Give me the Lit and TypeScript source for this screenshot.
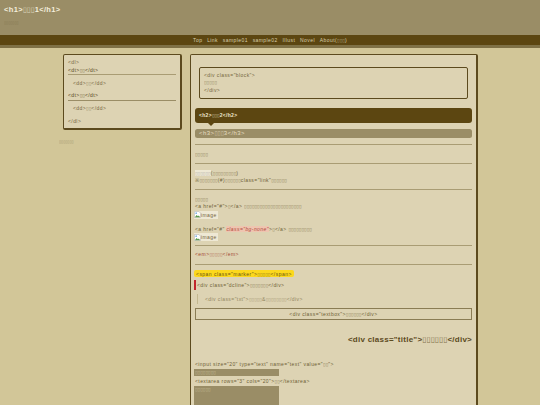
import { LitElement, html, css } from "lit";
import { customElement } from "lit/decorators.js";

const t = (n: number) => html`<span class="j">${"\u25AF".repeat(n)}</span>`;

@customElement("app-root")
export class AppRoot extends LitElement {
  static styles = css`
    :host { display: block; width: 540px; height: 405px; overflow: hidden; background: #d2c698; font-family: "Liberation Sans", Arial, sans-serif; font-size: 5px; letter-spacing: .42px; color: #6e5f36; line-height: 7.5px; }
    .j { font-family: "DejaVu Sans", sans-serif; font-size: .95em; letter-spacing: 0; font-weight: 400; opacity: .7; line-height: 0; }
    .head { height: 35px; background: #9a8d66; box-sizing: border-box; padding: 5px 4px 0; }
    h1 { margin: 0; font-size: 7.5px; line-height: 10px; color: #f4eedc; letter-spacing: .35px; }
    .sub { margin-top: 4px; color: #7d7048; font-size: 4px; letter-spacing: 0; line-height: 8px; }
    .nav { height: 10px; background: #5c4611; border-bottom: 3px solid #7f7146; display: flex; justify-content: center; gap: 4.8px; color: #d8ceaa; line-height: 10px; }
    .cols { display: flex; align-items: flex-start; padding: 6px 0 0 63px; gap: 8px; }
    .left { width: 119px; flex: none; }
    .dl { box-sizing: border-box; width: 119px; height: 76px; background: #ddd3b3; border: 1px solid #5c4a1e; border-right-width: 2px; border-bottom-width: 2px; border-radius: 2px; padding: 4px 4px; color: #75663d; }
    .dt { color: #55451a; border-bottom: 1px solid #9a8d66; }
    .dt.a { border-bottom-color: #a99c74; height: 7.5px; }
    .dd { margin: 4.5px 0 5px 5px; }
    .leftnote { margin: 8px 0 0 -4px; font-size: 4px; letter-spacing: 0; color: #8d8058; }
    .main { box-sizing: border-box; width: 288px; height: 380px; background: #ddd3b3; border: 1px solid #5c4a1e; border-right-width: 2px; border-bottom: 0; border-radius: 2px 2px 0 0; padding: 12px 4px 0 4px; }
    .block { box-sizing: border-box; height: 32px; margin: 0 4px; border: 1px solid #5c4a1e; border-right-width: 1.5px; border-bottom-width: 1.5px; border-radius: 2px; padding: 3.5px 4px; color: #75663d; }
    h2 { position: relative; margin: 9px 0 0; height: 15px; background: #5c4611; border-radius: 3px; color: #efe8d0; font-size: 5px; font-weight: 700; line-height: 15px; padding-left: 4px; letter-spacing: .3px; }
    h2::after { content: ""; position: absolute; left: 13px; bottom: -3px; border: 3px solid transparent; border-bottom: 0; border-top-color: #5c4611; }
    h3 { margin: 6px 0 0; height: 9px; background: #9a8d66; border-radius: 2.5px; color: #e6dec2; font-size: 6px; font-weight: 400; line-height: 9px; padding-left: 4px; }
    .hr { border-top: 1px solid #a99c74; }
    .mark { background: #fcd81c; color: #6b5410; padding: 0.5px 2px; border-radius: 2px; margin-left: -1px; letter-spacing: .47px; }
    .em { color: #a34a33; }
    .red { color: #b3473a; background: #eec5b0; font-style: italic; }
    .link { background: #eee8d4; color: #999; }
    .img { display: flex; align-items: center; height: 8px; margin-left: -1px; }
    .img span { background: #eee8d4; padding-right: 1px; height: 8px; line-height: 8px; display: flex; align-items: center; color: #75663d; }
    .img svg { width: 7px; height: 7px; }
    .dline { border-left: 2px solid #c1272d; margin-left: -1px; padding-left: 1px; height: 10px; line-height: 10px; margin-top: 1.5px; }
    .txt { margin: 4px 0 0 2px; border-left: 1px solid #c4b88f; padding-left: 7px; color: #93865f; height: 10px; line-height: 10px; }
    .box { margin-top: 4px; height: 12px; box-sizing: border-box; border: 1px solid #8a7c54; text-align: center; line-height: 10px; }
    .title { margin-top: 15px; text-align: right; font-size: 8px; font-weight: 700; line-height: 10px; color: #5c4a1e; letter-spacing: .25px; }
    .inp { box-sizing: border-box; width: 85px; background: #9a8d66; color: #d8ceaa; padding-left: 1px; margin-left: -1px; }
    .inp.a { height: 7px; line-height: 7px; margin-top: 1px; }
    .inp.b { height: 30px; line-height: 7px; margin-top: 0; }
  `;

  private img() {
    return html`<div class="img"><span><svg viewBox="0 0 16 16"><path d="M1 1h10l4 4v10H1z" fill="#fff" stroke="#9a9a9a"/><path d="M2 14l4-5 3 3 2-2 3 4z" fill="#5a9a4a"/><circle cx="5" cy="5" r="2" fill="#7fb3e6"/></svg>image</span></div>`;
  }

  render() {
    return html`
      <div class="head"><h1>&lt;h1&gt;${t(3)}1&lt;/h1&gt;</h1><div class="sub">${t(7)}</div></div>
      <div class="nav"><span>Top</span><span>Link</span><span>sample01</span><span>sample02</span><span>Illust</span><span>Novel</span><span>About(${t(3)})</span></div>
      <div class="cols">
        <div class="left">
          <div class="dl">
            <div>&lt;dl&gt;</div>
            <div class="dt a">&lt;dt&gt;${t(2)}&lt;/dt&gt;</div>
            <div class="dd">&lt;dd&gt;${t(2)}&lt;/dd&gt;</div>
            <div class="dt">&lt;dt&gt;${t(2)}&lt;/dt&gt;</div>
            <div class="dd">&lt;dd&gt;${t(2)}&lt;/dd&gt;</div>
            <div>&lt;/dl&gt;</div>
          </div>
          <div class="leftnote">${t(7)}</div>
        </div>
        <div class="main">
          <div class="block"><div>&lt;div class="block"&gt;</div><div>${t(5)}</div><div>&lt;/div&gt;</div></div>
          <h2>&lt;h2&gt;${t(3)}2&lt;/h2&gt;</h2>
          <h3>&lt;h3&gt;${t(3)}3&lt;/h3&gt;</h3>
          <div class="hr" style="margin-top:6px"></div>
          <div style="margin-top:6px">${t(5)}</div>
          <div class="hr" style="margin-top:4px"></div>
          <div style="margin-top:6px"><span class="link">${t(6)}</span>(${t(9)})</div>
          <div>※${t(7)}(#)${t(6)}class="link"${t(6)}</div>
          <div class="hr" style="margin-top:4px"></div>
          <div style="margin-top:6px">${t(5)}</div>
          <div>&lt;a href="#"&gt;${t(1)}&lt;/a&gt; ${t(22)}</div>
          ${this.img()}
          <div style="margin-top:7px">&lt;a href="#" <span class="red">class="bg-none"</span>&gt;${t(1)}&lt;/a&gt; ${t(9)}</div>
          ${this.img()}
          <div class="hr" style="margin-top:3.5px"></div>
          <div class="em" style="margin-top:5.5px">&lt;em&gt;${t(5)}&lt;/em&gt;</div>
          <div class="hr" style="margin-top:5px"></div>
          <div style="margin-top:6px"><span class="mark">&lt;span class="marker"&gt;${t(5)}&lt;/span&gt;</span></div>
          <div class="dline">&lt;div class="dcline"&gt;${t(7)}&lt;/div&gt;</div>
          <div class="txt">&lt;div class="txt"&gt;${t(5)}&amp;${t(8)}&lt;/div&gt;</div>
          <div class="box">&lt;div class="textbox"&gt;${t(6)}&lt;/div&gt;</div>
          <div class="title">&lt;div class="title"&gt;${t(6)}&lt;/div&gt;</div>
          <div style="margin-top:16px">&lt;input size="20" type="text" name="text" value="${t(2)}"&gt;</div>
          <div class="inp a">${t(8)}</div>
          <div style="margin-top:2px">&lt;textarea rows="3" cols="20"&gt;${t(2)}&lt;/textarea&gt;</div>
          <div class="inp b">${t(6)}</div>
        </div>
      </div>
    `;
  }
}
